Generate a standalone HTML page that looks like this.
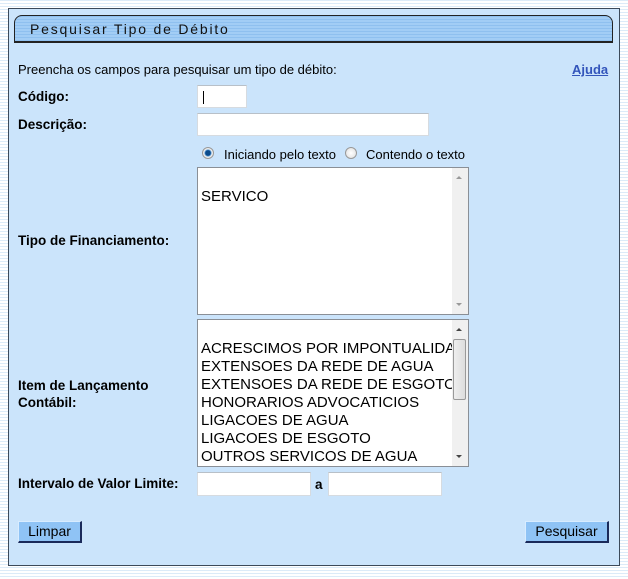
<!DOCTYPE html>
<html><head><meta charset="utf-8"><style>
*{box-sizing:border-box}
body{margin:0;width:628px;height:579px;overflow:hidden;font-family:"Liberation Sans",Arial,sans-serif;font-size:13px;color:#000;
background:repeating-linear-gradient(#dcebf8 0 1px,#ffffff 1px 3px);position:relative}
.a{position:absolute}
#panel{left:8px;top:8px;width:612px;height:558px;background:#cbe4fb;border:1px solid #3c4a5a}
#hdr{left:14px;top:15px;width:599px;height:28px;border:1px solid #222;border-bottom:2px solid #222;border-radius:8px 8px 0 0;
background:repeating-linear-gradient(#8fc0ef 0 1px,#a2cdf5 1px 3px);}
#hdr span{position:absolute;left:15px;top:5px;font-size:14px;letter-spacing:1.8px;color:#111}
.l{font-weight:bold;font-size:13.5px}
.in{background:#fff;border:1px solid #d6dbe0;border-top-color:#b8c0c8}
.box{background:#fff;border:1px solid #8a8f96;font-size:15px;line-height:18px;padding-left:3px;white-space:nowrap;overflow:hidden}
.sb{position:absolute;right:0;top:0;width:16px;height:100%;background:#f0f0f0}
.btn{background:#8fc3f5;border:1px solid #2a3a6a;border-top-color:#d8ecff;border-left-color:#d8ecff;border-right:2px solid #1a2a5a;border-bottom:2px solid #1a2a5a;font-size:14px;text-align:center;line-height:18px}
.rad{width:12px;height:12px;border-radius:50%;border:1px solid #999;background:radial-gradient(#fff,#ddd)}
</style></head><body>
<div id="panel" class="a"></div>
<div id="hdr" class="a"><span>Pesquisar Tipo de Débito</span></div>
<div class="a" style="left:18px;top:62px">Preencha os campos para pesquisar um tipo de débito:</div>
<div class="a l" style="left:572px;top:62px;color:#3355bb;text-decoration:underline;font-size:13px">Ajuda</div>
<div class="a l" style="left:18px;top:89px">Código:</div>
<div class="a in" style="left:197px;top:85px;width:50px;height:23px"><div style="position:absolute;left:5px;top:5px;width:1px;height:13px;background:#000"></div></div>
<div class="a l" style="left:18px;top:117px">Descrição:</div>
<div class="a in" style="left:197px;top:113px;width:232px;height:23px"></div>
<div class="a rad" style="left:202px;top:147px;background:radial-gradient(#0a4a8a 0 2.5px,#4a90d0 3px,#eee 4px)"></div>
<div class="a" style="left:224px;top:147px">Iniciando pelo texto</div>
<div class="a rad" style="left:345px;top:147px"></div>
<div class="a" style="left:366px;top:147px">Contendo o texto</div>
<div class="a box" style="left:197px;top:167px;width:272px;height:148px;padding-top:20px">SERVICO<div class="sb"><div style="position:absolute;left:4px;top:8px;border:3px solid transparent;border-bottom-color:#999;border-top:0"></div><div style="position:absolute;left:4px;bottom:8px;border:3px solid transparent;border-top-color:#999;border-bottom:0"></div></div></div>
<div class="a l" style="left:18px;top:233px">Tipo de Financiamento:</div>
<div class="a box" style="left:197px;top:319px;width:272px;height:148px;padding-top:20px">ACRESCIMOS POR IMPONTUALIDADE<br>EXTENSOES DA REDE DE AGUA<br>EXTENSOES DA REDE DE ESGOTO<br>HONORARIOS ADVOCATICIOS<br>LIGACOES DE AGUA<br>LIGACOES DE ESGOTO<br>OUTROS SERVICOS DE AGUA<div class="sb"><div style="position:absolute;left:4px;top:8px;border:3px solid transparent;border-bottom-color:#444;border-top:0"></div><div style="position:absolute;left:1px;top:19px;width:13px;height:61px;border:1px solid #999;border-radius:2px;background:linear-gradient(90deg,#eee,#ddd)"></div><div style="position:absolute;left:4px;bottom:8px;border:3px solid transparent;border-top-color:#444;border-bottom:0"></div></div></div>
<div class="a l" style="left:18px;top:377px;line-height:17px">Item de Lançamento<br>Contábil:</div>
<div class="a l" style="left:18px;top:476px">Intervalo de Valor Limite:</div>
<div class="a in" style="left:197px;top:472px;width:114px;height:24px"></div>
<div class="a l" style="left:315px;top:477px">a</div>
<div class="a in" style="left:328px;top:472px;width:114px;height:24px"></div>
<div class="a btn" style="left:18px;top:521px;width:64px;height:22px">Limpar</div>
<div class="a btn" style="left:525px;top:521px;width:84px;height:22px">Pesquisar</div>
</body></html>
